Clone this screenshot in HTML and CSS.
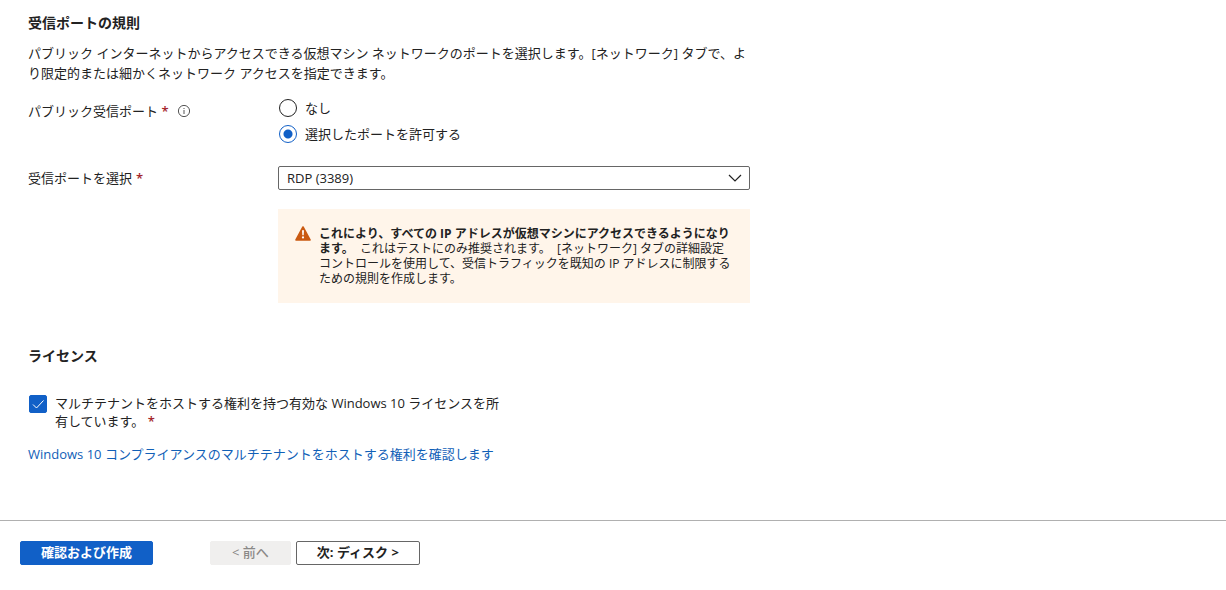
FILE: index.html
```
<!DOCTYPE html>
<html lang="ja">
<head>
<meta charset="utf-8">
<title>仮想マシンの作成</title>
<link rel="stylesheet" href="styles.css">
</head>

<body>
<form class="page">
	<main class="content">
		<section class="section">
			<h2>受信ポートの規則</h2>
			<p class="desc">パブリック インターネットからアクセスできる仮想マシン ネットワークのポートを選択します。[ネットワーク] タブで、より限定的または細かくネットワーク アクセスを指定できます。</p>

			<div class="row" role="radiogroup" aria-labelledby="port-label">
				<div class="label">
					<span id="port-label">パブリック受信ポート <span class="req">*</span></span>
					<svg class="info" viewBox="0 0 14 14" aria-hidden="true">
						<circle cx="7" cy="7" r="5.6" fill="none" stroke="#555" stroke-width="1"/>
						<path d="M7 6v4M7 4v1" stroke="#555" stroke-width="1"/>
					</svg>
				</div>
				<div class="radios">
					<label class="radio"><input type="radio" name="port" value="none">なし</label>
					<label class="radio"><input type="radio" name="port" value="allow" checked>選択したポートを許可する</label>
				</div>
			</div>

			<div class="row">
				<label class="label" for="ports">受信ポートを選択 <span class="req">*</span></label>
				<div class="select">
					<select id="ports">
						<option>RDP (3389)</option>
					</select>
					<svg class="arrow" viewBox="0 0 14 8" aria-hidden="true">
						<path d="M1 1l6 6 6-6" fill="none" stroke="#222" stroke-width="1.2"/>
					</svg>
				</div>
			</div>

			<div class="warning">
				<svg class="warn-icon" viewBox="0 0 16 15" aria-hidden="true">
					<path d="M8 1L15 14H1z" fill="#ca5a12" stroke="#ca5a12" stroke-width="1.6" stroke-linejoin="round"/>
					<path d="M7 4.2h2l-.3 5H7.3z" fill="#fff"/>
					<circle cx="8" cy="11.4" r="1.1" fill="#fff"/>
				</svg>
				<p><b>これにより、すべての IP アドレスが仮想マシンにアクセスできるようになります。</b>&nbsp; これはテストにのみ推奨されます。&nbsp; [ネットワーク] タブの詳細設定コントロールを使用して、受信トラフィックを既知の IP アドレスに制限するための規則を作成します。</p>
			</div>
		</section>

		<section class="section">
			<h2>ライセンス</h2>
			<label class="check">
				<span class="box">
					<input type="checkbox" checked>
					<svg class="tick" viewBox="0 0 18 18" aria-hidden="true">
						<path d="M4 9.5l3.5 3.5 7-7.5" fill="none" stroke="#fff" stroke-width="1"/>
					</svg>
				</span>
				<span>マルチテナントをホストする権利を持つ有効な Windows 10 ライセンスを所有しています。 <span class="req">*</span></span>
			</label>
			<a class="link" href="#">Windows 10 コンプライアンスのマルチテナントをホストする権利を確認します</a>
		</section>
	</main>

	<footer class="footer">
		<button class="btn primary" type="submit">確認および作成</button>
		<button class="btn prev" type="button" disabled>&lt; 前へ</button>
		<button class="btn next" type="button">次: ディスク &gt;</button>
	</footer>
</form>
</body>
</html>
```
FILE: styles.css
```
*{ margin:0; padding:0; box-sizing:border-box;}
body{ background:#fff; color:#222; font:13px/20px "Open Sans","Noto Sans CJK JP",sans-serif;}
input,select,button{ font:inherit; color:inherit;}
.page{ min-height:100vh; display:flex; flex-direction:column;}
.content{ flex:1; max-width:778px; padding:13px 28px 0;}
.section{ margin-bottom:43px;}
h2{ font-size:14px; line-height:20px; font-weight:bold;}
.desc{ margin-top:10px;}
.req{ color:#a4262c; font-weight:600;}

.row{ display:grid; grid-template-columns:250px 1fr; margin-top:16px;}
.row + .row{ margin-top:23px;}
.label{ display:flex; align-items:center; gap:4px; height:24px;}
.label .info{ width:14px; height:14px; margin-left:4px;}
.radios{ display:flex; flex-direction:column; gap:8px; padding-left:1px;}
.radio{ display:flex; align-items:center; gap:8px; height:18px; line-height:18px;}
.radio input{ appearance:none; width:18px; height:18px; border:1px solid #222; border-radius:50%; background:#fff;}
.radio input:checked{ border-color:#1160c7; background:radial-gradient(circle,#1160c7 4px,#fff 5px);}

.select{ display:grid; align-items:center;}
.select select{ grid-area:1/1; appearance:none; width:100%; height:24px; padding:0 30px 0 8px; border:1px solid #666; border-radius:2px; background:#fff;}
.select .arrow{ grid-area:1/1; justify-self:end; width:14px; height:8px; margin-right:8px; pointer-events:none;}

.warning{ display:flex; gap:8px; margin:19px 0 0 250px; padding:17px 18px 17px 17px; background:#fff5ea; font-size:12px; line-height:15px;}
.warn-icon{ flex:none; width:16px; height:15px;}

.check{ display:flex; gap:8px; max-width:474px; margin:28px 0 0 1px; line-height:18px;}
.box{ flex:none; display:grid; width:18px; height:18px; margin-top:1px;}
.box input{ grid-area:1/1; appearance:none; width:18px; height:18px; border:1px solid #1160c7; border-radius:2px;}
.box input:checked{ background:#1160c7;}
.tick{ grid-area:1/1; width:18px; height:18px; pointer-events:none;}
.link{ display:block; margin-top:14px; color:#1160b7; text-decoration:none;}

.footer{ display:flex; align-items:center; height:70px; padding:0 20px 5px; border-top:1px solid #b0b0b0;}
.btn{ height:24px; padding:0 20px 2px; border:1px solid #666; border-radius:2px; background:#fff; font-weight:bold; line-height:20px;}
.primary{ border-color:#1160c7; background:#1160c7; color:#fff;}
.prev{ margin:0 5px 0 57px; padding:0 21px 2px; border-color:#f0efee; background:#f0efee; color:#8a8886; font-weight:500;}
```
